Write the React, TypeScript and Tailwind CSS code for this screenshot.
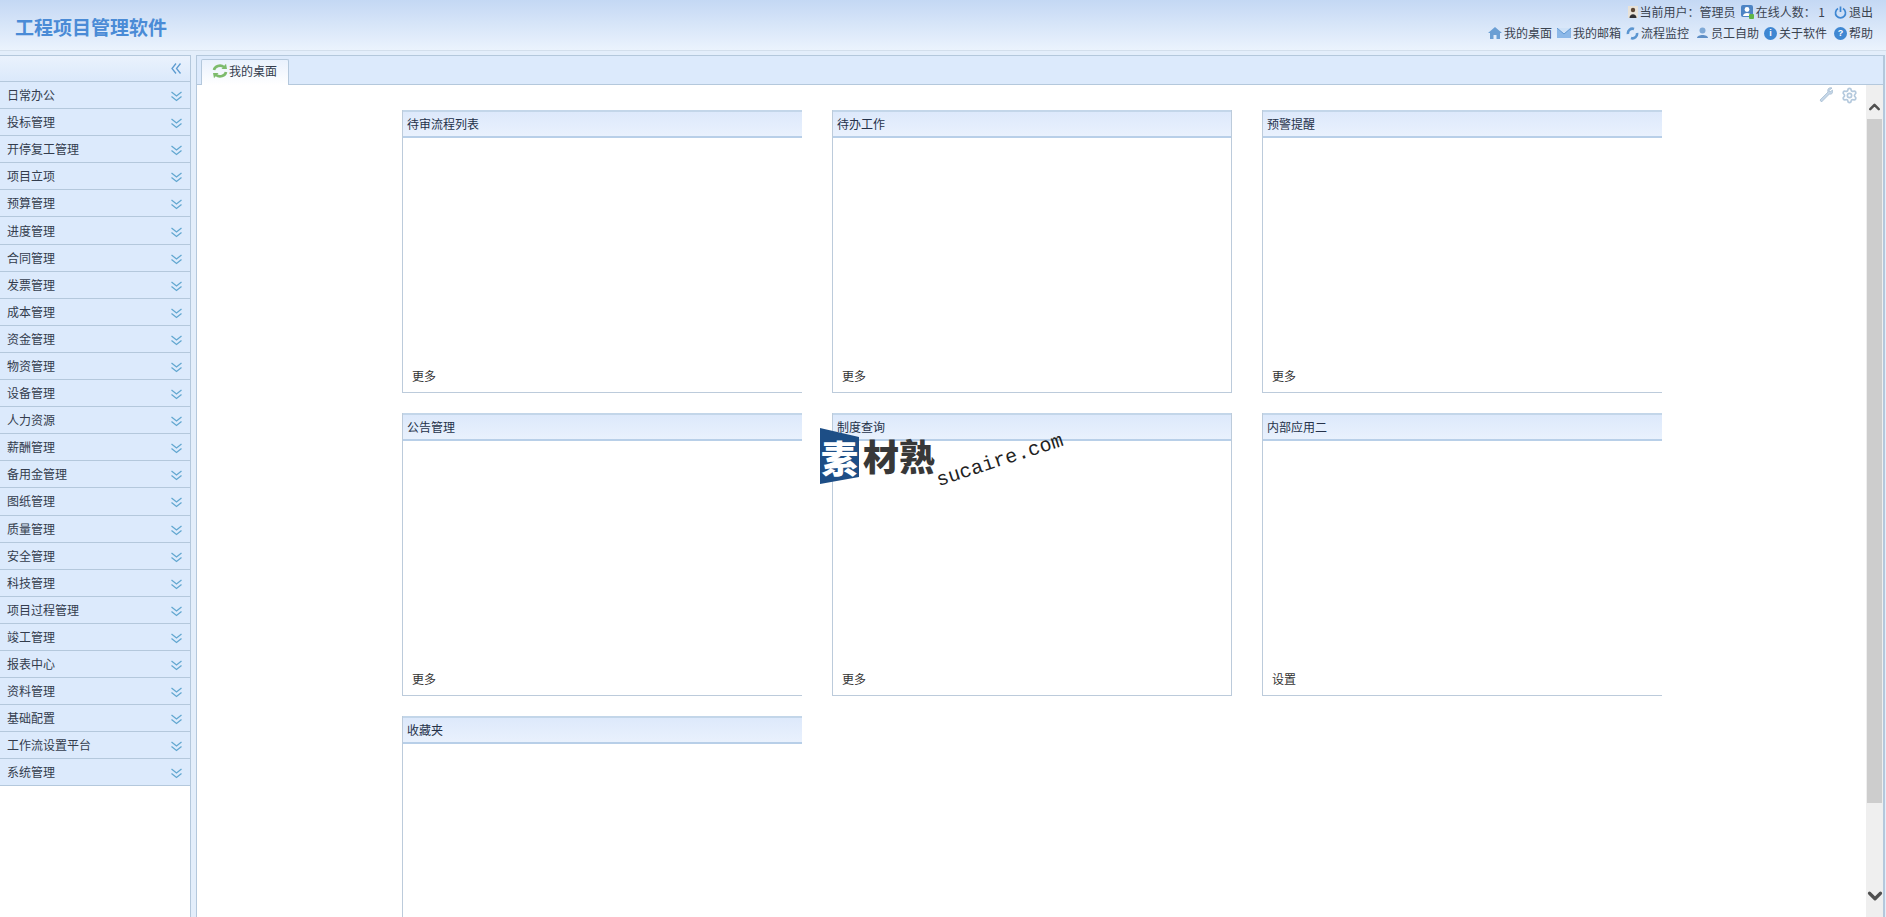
import React from 'react';
import { ChevronUp, ChevronDown, Settings } from 'lucide-react';

const menuItems = [
  '日常办公', '投标管理', '开停复工管理', '项目立项', '预算管理', '进度管理', '合同管理', '发票管理', '成本管理',
  '资金管理', '物资管理', '设备管理', '人力资源', '薪酬管理', '备用金管理', '图纸管理', '质量管理', '安全管理',
  '科技管理', '项目过程管理', '竣工管理', '报表中心', '资料管理', '基础配置', '工作流设置平台', '系统管理',
];

const panels = [
  { title: '待审流程列表', link: '更多', closed: false },
  { title: '待办工作', link: '更多', closed: true },
  { title: '预警提醒', link: '更多', closed: false },
  { title: '公告管理', link: '更多', closed: false },
  { title: '制度查询', link: '更多', closed: true },
  { title: '内部应用二', link: '设置', closed: false },
  { title: '收藏夹', link: '', closed: false },
];

const HomeIcon = () => (
  <svg width="14" height="12" viewBox="0 0 14 12"><path d="M7 0 L14 6 L12 6 L12 12 L8.5 12 L8.5 8 L5.5 8 L5.5 12 L2 12 L2 6 L0 6 Z" fill="#6b9fd4" /></svg>
);
const MailIcon = () => (
  <svg width="14" height="10" viewBox="0 0 14 10"><rect width="14" height="10" fill="#8cb8e8" /><path d="M0 0 L7 6 L14 0" fill="#cfe2f7" stroke="#5f97d2" strokeWidth="1" /></svg>
);
const FlowIcon = () => (
  <svg width="13" height="13" viewBox="0 0 13 13" fill="none"><path d="M2 7 A4.5 4.5 0 0 1 8 2 M11 6 A4.5 4.5 0 0 1 5 11" stroke="#5b95d0" strokeWidth="2.6" /></svg>
);
const StaffIcon = () => (
  <svg width="13" height="12" viewBox="0 0 13 12"><circle cx="6.5" cy="3.5" r="3" fill="#7fa9d6" /><path d="M1 11 C1 7 12 7 12 11 Z" fill="#5f8fc6" /></svg>
);
const RoundIcon = ({ mark }: { mark: string }) => (
  <span className="flex h-[13px] w-[13px] items-center justify-center rounded-full bg-[#3f87d2] text-[9px] font-bold leading-none text-white [font-family:'Liberation_Sans',sans-serif]">{mark}</span>
);
const UserPhoto = () => (
  <svg width="10" height="12" viewBox="0 0 10 12"><rect width="10" height="12" fill="#e8e2d8" /><circle cx="5" cy="4" r="2.2" fill="#5b4636" /><path d="M1.5 12 C1.5 7 8.5 7 8.5 12 Z" fill="#2f2f33" /></svg>
);
const OnlineIcon = () => (
  <svg width="13" height="14" viewBox="0 0 13 14"><rect width="12" height="12" rx="2" fill="#4d84c4" /><circle cx="6" cy="4.5" r="2.4" fill="#fff" /><path d="M2 11 C2 7 10 7 10 11 Z" fill="#fff" /><rect x="8" y="9" width="5" height="5" rx="1" fill="#5eb548" /></svg>
);
const PowerIcon = () => (
  <svg width="13" height="13" viewBox="0 0 13 13" fill="none"><path d="M4 2.6 A5 5 0 1 0 9 2.6" stroke="#3f87d2" strokeWidth="1.7" /><path d="M6.5 0.5 V6" stroke="#3f87d2" strokeWidth="1.7" /></svg>
);
const RefreshIcon = () => (
  <svg width="16" height="16" viewBox="0 0 16 16" fill="none">
    <path d="M2 7 A6 5 0 0 1 12 4" stroke="#7dbb6c" strokeWidth="2.6" />
    <path d="M9.5 6 L15 6 L14 0.8 Z" fill="#7dbb6c" />
    <path d="M14 9 A6 5 0 0 1 4 12" stroke="#7dbb6c" strokeWidth="2.6" />
    <path d="M6.5 10 L1 10 L2 15.2 Z" fill="#7dbb6c" />
  </svg>
);
const WrenchIcon = () => (
  <svg width="14" height="16" viewBox="0 0 14 16"><path d="M13 1 C10 0 8 2 9 5 L1 13 L2.5 15 L10.5 7 C13 8 14.5 5 13.5 3 L11 5 L10 3.5 Z" fill="#c6d7e8" stroke="#94aec8" strokeWidth="0.6" /></svg>
);
const DoubleChevron = ({ dir, className }: { dir: 'down' | 'left'; className: string }) => (
  <svg width="11" height="11" viewBox="0 0 11 11" fill="none" stroke="currentColor" strokeWidth="1.3" className={className}>
    {dir === 'down' ? (
      <path d="M0.5 1 L5.5 5 L10.5 1 M0.5 5.5 L5.5 9.5 L10.5 5.5" />
    ) : (
      <path d="M5 0.5 L1 5.5 L5 10.5 M9.5 0.5 L5.5 5.5 L9.5 10.5" />
    )}
  </svg>
);

const HeaderLink = ({ icon, label, className = '' }: { icon: React.ReactNode; label: string; className?: string }) => (
  <span className={`flex items-center gap-[2px] ${className}`}>
    {icon}
    <span>{label}</span>
  </span>
);

const Panel = ({ title, link, closed }: { title: string; link: string; closed: boolean }) => (
  <div className={`flex h-[283px] w-[400px] shrink-0 flex-col border-b border-l border-[#bccbdb] ${closed ? 'border-r' : ''}`}>
    <div className="flex h-[28px] shrink-0 items-center border-y-2 border-t-[#c3d6e9] border-b-[#b8cfe8] bg-gradient-to-b from-[#dde9fb] to-[#e9f1fd] pl-[4px] text-[#25324a]">
      {title}
    </div>
    <div className="flex-1" />
    {link && <div className="h-[28px] pt-[3px] pl-[9px] text-[#333]">{link}</div>}
  </div>
);

export default function App() {
  return (
    <div className="flex h-[917px] flex-col overflow-hidden bg-[#e3eefb] text-[12px] [font-family:'Noto_Sans_CJK_SC','Liberation_Sans',sans-serif]">
      <header className="flex h-[51px] shrink-0 items-start justify-between border-b border-[#d3dfec] bg-gradient-to-b from-[#c4d8f4] to-[#ebf3fd] pr-[13px] pl-[15px]">
        <h1 className="pt-[13px] text-[19px] font-bold text-[#4a8bd6]">工程项目管理软件</h1>
        <div className="flex flex-col items-end gap-[7px] pt-[5px] text-[#3a4350]">
          <div className="flex h-[14px] items-center gap-[5px]">
            <HeaderLink icon={<UserPhoto />} label="当前用户：管理员" />
            <HeaderLink icon={<OnlineIcon />} label="在线人数： 1" />
            <HeaderLink icon={<PowerIcon />} label="退出" className="ml-[4px]" />
          </div>
          <div className="flex h-[14px] items-center gap-[5px]">
            <HeaderLink icon={<HomeIcon />} label="我的桌面" />
            <HeaderLink icon={<MailIcon />} label="我的邮箱" />
            <HeaderLink icon={<FlowIcon />} label="流程监控" />
            <HeaderLink icon={<StaffIcon />} label="员工自助" className="ml-[2px]" />
            <HeaderLink icon={<RoundIcon mark="i" />} label="关于软件" />
            <HeaderLink icon={<RoundIcon mark="?" />} label="帮助" className="ml-[2px]" />
          </div>
        </div>
      </header>

      <div className="flex min-h-0 flex-1 pt-[4px]">
        <aside className="flex w-[191px] shrink-0 flex-col border-t border-r border-[#b4c8dc] bg-white">
          <div className="flex h-[26px] shrink-0 items-center justify-end border-b border-[#b4c8dc] bg-gradient-to-b from-[#eaf2fd] to-[#dbe9fb] pr-[8px]">
            <DoubleChevron dir="left" className="text-[#5d9bd0]" />
          </div>
          {menuItems.map((item) => (
            <div key={item} className="flex h-[27.1px] shrink-0 items-center justify-between border-b border-[#b4c8dc] bg-[#dceafc] pr-[8px] pl-[7px] text-[#333c4d]">
              <span>{item}</span>
              <DoubleChevron dir="down" className="mt-[3px] text-[#62a7d0]" />
            </div>
          ))}
        </aside>

        <main className="mr-[1px] ml-[5px] flex min-w-0 flex-1 flex-col border-t border-r-2 border-l border-[#b4c8dc] bg-white">
          <div className="flex h-[29px] shrink-0 items-end border-b border-[#b4c8dc] bg-[#dceafc] pl-[4px]">
            <div className="relative top-[1px] flex h-[26px] w-[88px] items-center gap-[1px] rounded-t-[2px] border-x border-t border-[#b4c8dc] bg-gradient-to-b from-[#e9f1fd] to-white pb-[3px] pl-[10px] text-[#333c4d]">
              <RefreshIcon />
              <span>我的桌面</span>
            </div>
          </div>

          <div className="relative flex min-h-0 flex-1">
            <div className="min-w-0 flex-1 overflow-hidden">
              <div className="flex h-[25px] items-start justify-end gap-[8px] pt-[2px] pr-[8px]">
                <WrenchIcon />
                <Settings size={17} strokeWidth={2.4} className="text-[#b4c9dd]" />
              </div>
              <div className="grid grid-cols-[400px_400px_400px] gap-x-[30px] gap-y-[20px] pl-[205px]">
                {panels.map((p) => (
                  <Panel key={p.title} title={p.title} link={p.link} closed={p.closed} />
                ))}
              </div>
            </div>

            <div className="flex w-[17px] shrink-0 flex-col items-center bg-[#efefef]">
              <div className="flex h-[34px] w-full items-center justify-center pt-[10px]">
                <ChevronUp size={22} strokeWidth={3.5} className="text-[#505050]" />
              </div>
              <div className="h-[684px] w-[15px] bg-[#cdcdcd]" />
              <div className="mt-auto flex h-[28px] items-center justify-center pb-[14px]">
                <ChevronDown size={22} strokeWidth={3.5} className="text-[#505050]" />
              </div>
            </div>

            {/* watermark over the panels */}
            <div className="absolute top-[343px] left-[623px] flex items-start">
              <div className="relative h-[56px] w-[39px]">
                <svg width="39" height="56" viewBox="0 0 39 56" className="absolute inset-0"><polygon points="0,0 39,9 39,49 0,56" fill="#1d4e86" /></svg>
                <span className="absolute top-[11px] left-[1px] text-[37px] leading-none font-black text-white">素</span>
              </div>
              <span className="mt-[7px] ml-[4px] text-[36px] leading-[40px] font-black text-[#383838]">材熟</span>
            </div>
            <span className="absolute top-[366px] left-[737px] origin-center -rotate-[18deg] text-[20px] leading-none text-[#222] [font-family:'Liberation_Mono',monospace]">sucaire.com</span>
          </div>
        </main>
      </div>
    </div>
  );
}
